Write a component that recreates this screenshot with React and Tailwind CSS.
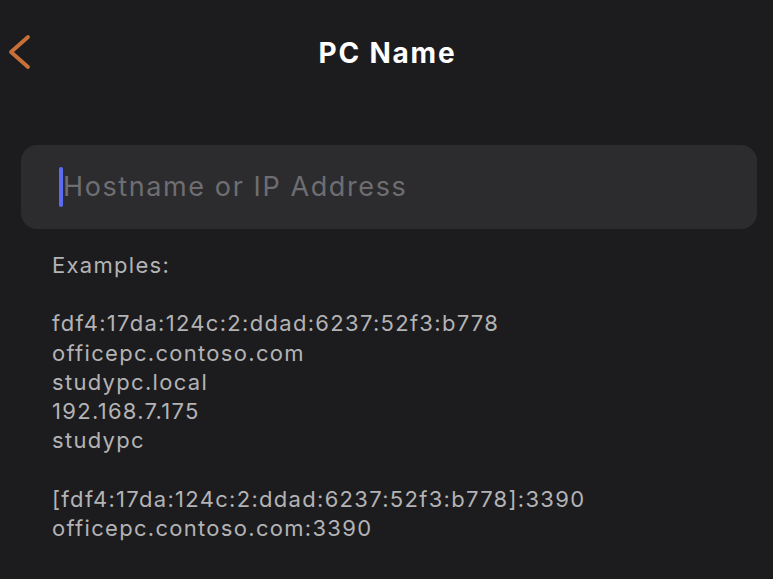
export default function App() {
    const examples = [
        "fdf4:17da:124c:2:ddad:6237:52f3:b778",
        "officepc.contoso.com",
        "studypc.local",
        "192.168.7.175",
        "studypc",
    ];
    const withPort = [
        "[fdf4:17da:124c:2:ddad:6237:52f3:b778]:3390",
        "officepc.contoso.com:3390",
    ];

    return (
        <div className="w-[773px] h-[579px] bg-[#1c1c1e] overflow-hidden font-['Inter',sans-serif]">
            {/* Nav bar */}
            <div className="relative h-[106px] flex items-start justify-center pt-[34px]">
                <button className="absolute left-[4px] top-[33px] text-[#c8703a]">
                    <svg width="28" height="38" viewBox="0 0 28 38" fill="none">
                        <path d="M24 4 L7 19 L24 34" stroke="currentColor" strokeWidth="3.8" strokeLinecap="round" strokeLinejoin="round" />
                    </svg>
                </button>
                <h1 className="text-[28px] font-bold text-white tracking-[1.8px] leading-[38px] pl-[2px]">PC Name</h1>
            </div>

            {/* Input */}
            <div className="pl-[21px] pr-[16px] pt-[39px]">
                <div className="h-[84px] rounded-[16px] bg-[#2c2c2e] flex items-center pl-[38px]">
                    <span className="w-[4px] h-[40px] rounded-full bg-[#5b6cf0]"></span>
                    <span className="text-[27px] text-[#6e6e72] tracking-[1.6px]">Hostname or IP Address</span>
                </div>
            </div>

            {/* Examples */}
            <div className="pl-[52px] pt-[22px] text-[22px] leading-[29.3px] text-[#b3b3b5] tracking-[1.3px]">
                <div>Examples:</div>
                <div className="h-[29px]"></div>
                {examples.map((e) => (
                    <div key={e}>{e}</div>
                ))}
                <div className="h-[29px]"></div>
                {withPort.map((e) => (
                    <div key={e}>{e}</div>
                ))}
            </div>
        </div>
    );
}
